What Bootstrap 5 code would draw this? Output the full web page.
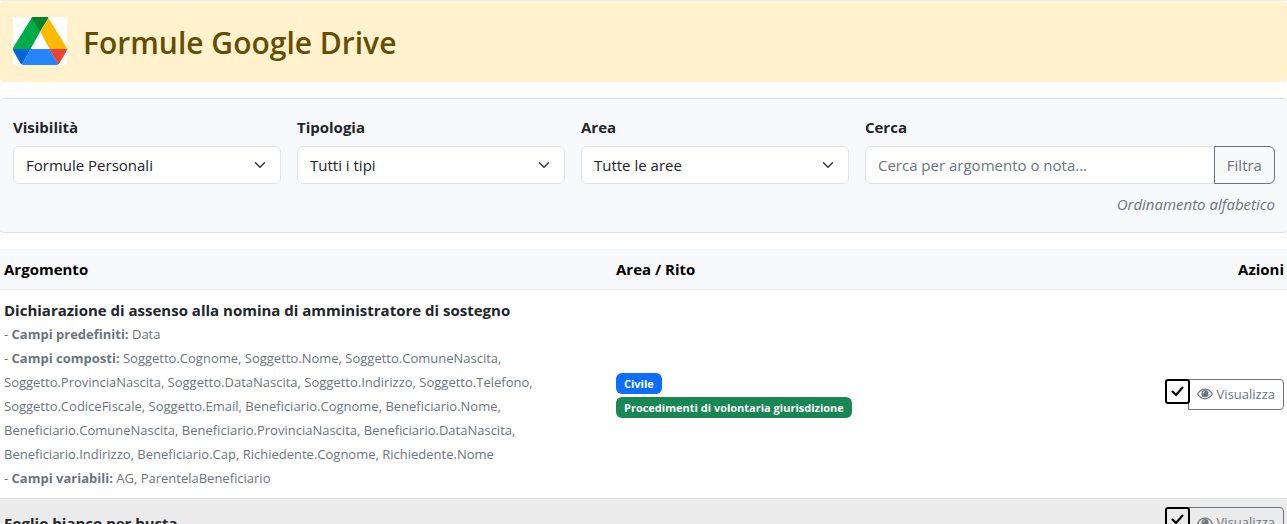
<!DOCTYPE html>
<html lang="it">
<head>
<meta charset="utf-8">
<meta name="viewport" content="width=device-width, initial-scale=1">
<title>Formule Google Drive</title>
<link href="https://cdn.jsdelivr.net/npm/bootstrap@5.3.0/dist/css/bootstrap.min.css" rel="stylesheet">
<style>
  body { font-family: "Segoe UI", "Open Sans", "Noto Sans", sans-serif; font-size: 15px; line-height: 24px; border-top: 1px solid #e9f1f5; }
  .page-banner { background: #fff2cd; color: #664d03; border-radius: 4px; padding: 16px 13px; }
  .page-banner h1 { font-size: 30px; line-height: 40px; font-weight: 600; padding-top: 2px; }
  .drive-logo { width: 54px; height: 49px; }
  .filter-panel { background: #f8f9fb; border: 1px solid #dee2e6; border-width: 1px 0; border-radius: 4px; padding: 16px 12px 16px 13px; }
  .filter-col { width: 100%; }
  .filter-panel .form-select, .filter-panel .form-control, .filter-panel .btn { font-size: 15px; line-height: 24px; }
  .filter-panel .form-label { margin-bottom: 7px; }
  .filter-panel .form-control::placeholder { color: #6c757d; }
  @media (min-width: 768px) {
    .filter-col { width: calc(200% / 9); }
    .filter-col-wide { width: calc(300% / 9); }
  }
  .formula-table { --bs-table-bg: #fff; }
  .formula-table th, .formula-table td { padding: 8px 3px 8px 4px; border-color: #e4e6e8; }
  .formula-table thead th { background: #f8f9fb; color: #000; }
  .formula-table tbody tr:nth-child(even) td { background: #ebebeb; }
  .col-topic { width: 612px; }
  .field-list { font-size: 13px; color: #6c757d; }
  .tag-pill { font-size: 11px; line-height: 13px; padding: 4px 8px; border-radius: 6px; }
  .row-check { appearance: none; width: 25px; height: 25px; border: 2px solid #000; border-radius: 3px; margin: 0 -2px 0 0; z-index: 1;
    background: #fff url("data:image/svg+xml,%3Csvg xmlns='http://www.w3.org/2000/svg' viewBox='0 0 21 21'%3E%3Cpath d='M5 10l4 4L16 6' fill='none' stroke='%23000' stroke-width='2.2'/%3E%3C/svg%3E") center / 21px 21px no-repeat; }
  tr:nth-child(even) .row-check { background-color: #ebebeb; }
  .view-btn { font-size: 13px; line-height: 21px; padding: 4px 8px; border-radius: 0 4px 4px 0; }
</style>
</head>
<body>
<header class="page-banner d-flex align-items-center gap-3 mb-3">
  <svg class="drive-logo flex-shrink-0" viewBox="0 0 54 49" role="img" aria-label="Google Drive">
    <path fill="#fff" d="M0 0H54V48H0Z"/>
    <path fill="#00ac47" d="M18.500 1Q19 0 20 0L27.300 14.500 17.500 32H0Q0 31 .5 30Z"/>
    <path fill="#00832d" d="M18.500 1Q19 0 20 0H34Q35 0 35.500 1L27.200 14.500Z"/>
    <path fill="#ffba00" d="M35.500 1L53.200 30Q54 31 54 32H36.500L27.200 14.500Z"/>
    <path fill="#0066da" d="M0 32H17.500L9 47.500Q8 47 7.500 46.500L1 35Q0 33.500 0 32Z"/>
    <path fill="#2684fc" d="M17.500 32H36.500L45.500 47.300Q44.500 48 43.500 48H11Q10 48 9 47.500Z"/>
    <path fill="#ea4335" d="M36.500 32H54Q54 33.500 53 35L46.500 46Q46 47 45.300 47.500Z"/>
  </svg>
  <h1 class="mb-0">Formule Google Drive</h1>
</header>

<form class="filter-panel mb-3">
  <div class="row gx-3 gy-2">
    <div class="filter-col">
      <label class="form-label fw-bold" for="visibility">Visibilità</label>
      <select class="form-select" id="visibility"><option>Formule Personali</option></select>
    </div>
    <div class="filter-col">
      <label class="form-label fw-bold" for="kind">Tipologia</label>
      <select class="form-select" id="kind"><option>Tutti i tipi</option></select>
    </div>
    <div class="filter-col">
      <label class="form-label fw-bold" for="area">Area</label>
      <select class="form-select" id="area"><option>Tutte le aree</option></select>
    </div>
    <div class="filter-col filter-col-wide">
      <label class="form-label fw-bold" for="search">Cerca</label>
      <div class="input-group">
        <input class="form-control" type="text" id="search" placeholder="Cerca per argomento o nota...">
        <button class="btn btn-outline-secondary" type="button">Filtra</button>
      </div>
    </div>
    <div class="col-12 text-end fst-italic text-secondary">Ordinamento alfabetico</div>
  </div>
</form>

<table class="table formula-table align-middle mb-0">
  <thead>
    <tr><th class="col-topic" scope="col">Argomento</th><th scope="col">Area / Rito</th><th class="text-end" scope="col">Azioni</th></tr>
  </thead>
  <tbody>
    <tr>
      <td>
        <div class="fw-bold">Dichiarazione di assenso alla nomina di amministratore di sostegno</div>
        <div class="field-list">
          - <strong>Campi predefiniti:</strong> Data<br>
          - <strong>Campi composti:</strong> Soggetto.Cognome, Soggetto.Nome, Soggetto.ComuneNascita, <br>Soggetto.ProvinciaNascita, Soggetto.DataNascita, Soggetto.Indirizzo, Soggetto.Telefono, <br>Soggetto.CodiceFiscale, Soggetto.Email, Beneficiario.Cognome, Beneficiario.Nome, <br>Beneficiario.ComuneNascita, Beneficiario.ProvinciaNascita, Beneficiario.DataNascita, <br>Beneficiario.Indirizzo, Beneficiario.Cap, Richiedente.Cognome, Richiedente.Nome<br>
          - <strong>Campi variabili:</strong> AG, ParentelaBeneficiario
        </div>
      </td>
      <td>
        <span class="badge text-bg-primary tag-pill">Civile</span><br>
        <span class="badge text-bg-success tag-pill">Procedimenti di volontaria giurisdizione</span>
      </td>
      <td>
        <div class="d-flex justify-content-end align-items-start">
          <input class="row-check" type="checkbox" checked aria-label="Seleziona Dichiarazione di assenso">
          <button class="btn btn-outline-secondary view-btn d-flex align-items-center gap-1" type="button">
            <svg width="16" height="16" viewBox="0 0 16 16" aria-hidden="true"><path d="M.7 8Q3.500 3.200 8 3.200T15.300 8Q12.500 12.800 8 12.800T.7 8Z" fill="none" stroke="currentColor" stroke-width="1.300"/><circle cx="8" cy="7.700" r="3.600" fill="currentColor"/><path d="M6 7.500Q6 5.700 7.800 5.600" fill="none" stroke="#fff" stroke-width=".9"/></svg>
            Visualizza
          </button>
        </div>
      </td>
    </tr>
    <tr>
      <td><div class="fw-bold">Foglio bianco per busta</div></td>
      <td></td>
      <td>
        <div class="d-flex justify-content-end align-items-start">
          <input class="row-check" type="checkbox" checked aria-label="Seleziona Foglio bianco per busta">
          <button class="btn btn-outline-secondary view-btn d-flex align-items-center gap-1" type="button">
            <svg width="16" height="16" viewBox="0 0 16 16" aria-hidden="true"><path d="M.7 8Q3.500 3.200 8 3.200T15.300 8Q12.500 12.800 8 12.800T.7 8Z" fill="none" stroke="currentColor" stroke-width="1.300"/><circle cx="8" cy="7.700" r="3.600" fill="currentColor"/><path d="M6 7.500Q6 5.700 7.800 5.600" fill="none" stroke="#ebebeb" stroke-width=".9"/></svg>
            Visualizza
          </button>
        </div>
      </td>
    </tr>
  </tbody>
</table>
<script src="https://cdn.jsdelivr.net/npm/bootstrap@5.3.0/dist/js/bootstrap.bundle.min.js"></script>
</body>
</html>
